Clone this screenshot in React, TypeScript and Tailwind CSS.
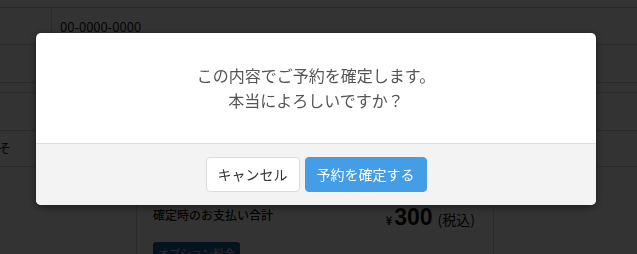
import React from "react";

const font = { fontFamily: '"Noto Sans CJK JP", "Noto Sans", sans-serif' };

function BackgroundPage() {
  return (
    <div className="min-h-screen bg-white text-[#222]" style={font}>
      <div className="h-[8px] border-b border-[#d2d2d2]" />
      <div className="flex h-[37px] border-b border-[#d2d2d2]">
        <div className="w-[52px] border-r border-[#d2d2d2]" />
        <div className="pl-[8px] pt-[11px] text-[13px] leading-[16px]">00-0000-0000</div>
      </div>
      <div className="flex h-[38px] border-b border-[#d2d2d2]">
        <div className="w-[52px] border-r border-[#d2d2d2]" />
      </div>
      <div className="h-[10px] border-b border-[#d2d2d2]" />
      <div className="flex h-[38px] border-b border-[#d2d2d2]">
        <div className="w-[52px] border-r border-[#d2d2d2]" />
      </div>
      <div className="flex h-[36px] border-b border-[#d2d2d2]">
        <div className="flex w-[11px] justify-end overflow-hidden whitespace-nowrap pt-[9px] text-[13px] leading-[16px]">
          およそ
        </div>
      </div>
      <div className="flex h-[87px] overflow-hidden">
        <div className="w-[136px]" />
        <div className="w-[358px] border-x border-[#d2d2d2] px-4 pt-[40px]">
          <div className="flex items-start justify-between">
            <span className="text-[12px] font-medium leading-[16px] text-[#111]">確定時のお支払い合計</span>
            <span className="-mt-[2px] mr-[2px] flex items-baseline text-[#111]">
              <span className="text-[11px] font-bold">¥</span>
              <span className="ml-[2px] text-[23px] font-bold leading-[24px]" style={{ fontFamily: '"Liberation Sans", Arial, sans-serif' }}>
                300
              </span>
              <span className="ml-[5px] text-[14px]">(税込)</span>
            </span>
          </div>
          <div className="mt-[12px] inline-block rounded-[3px] bg-[#1b5f8c] px-[5px] py-[3px] text-[11px] font-medium leading-[16px] text-[#a9c8dc]">
            オプション料金
          </div>
        </div>
        <div className="flex-1" />
      </div>
    </div>
  );
}

function ConfirmModal() {
  return (
    <div className="fixed inset-0 flex items-start bg-black/80" style={font}>
      <div className="ml-[36px] mt-[33px] w-[560px] overflow-hidden rounded-[5px] bg-white shadow-[0_2px_8px_rgba(0,0,0,0.5)]">
        <div className="flex h-[110px] flex-col items-center justify-center text-[16px] leading-[25px] text-[#555]">
          <p>この内容でご予約を確定します。</p>
          <p>本当によろしいですか？</p>
        </div>
        <div className="flex justify-center gap-[5px] border-t border-[#dddddd] bg-[#f3f3f3] py-[13px]">
          <button className="h-[35px] w-[94px] rounded-[4px] border border-[#dcdcdc] bg-white text-[14px] text-[#333]">
            キャンセル
          </button>
          <button className="h-[35px] w-[122px] rounded-[4px] border border-[#449de5] bg-[#449de5] text-[14px] text-white">
            予約を確定する
          </button>
        </div>
      </div>
    </div>
  );
}

export default function App() {
  return (
    <div className="relative">
      <BackgroundPage />
      <ConfirmModal />
    </div>
  );
}
